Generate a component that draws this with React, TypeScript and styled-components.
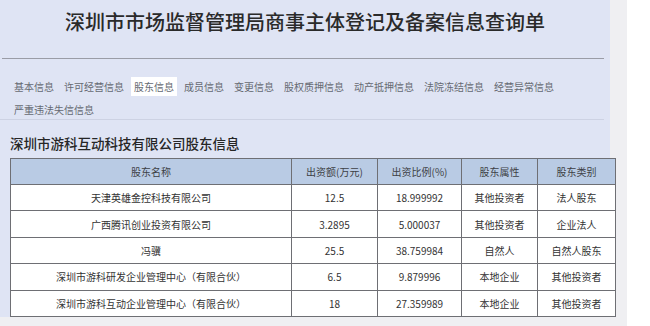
import React from "react";
import styled, { createGlobalStyle } from "styled-components";

const Global = createGlobalStyle`
  html, body { margin: 0; padding: 0; background: #ffffff; }
  body { font-family: "Noto Sans CJK SC", "Noto Sans", sans-serif; }
`;

const Outer = styled.div`
  width: 627px;
  height: 326px;
  background: #efeff2;
`;

const Panel = styled.div`
  width: 610px;
  height: 317px;
  background: #dfe4f4;
  display: flex;
  flex-direction: column;
`;

const Title = styled.h1`
  margin: 0;
  padding-top: 7px;
  height: 59px;
  box-sizing: border-box;
  text-align: center;
  font-size: 20px;
  line-height: 30px;
  font-weight: 500;
  color: #2a2a2a;
`;

const Rule = styled.div`
  margin: 0 6px 0 2px;
  height: 1px;
  background: #9a9ca6;
`;

const Tabs = styled.div`
  display: flex;
  flex-wrap: wrap;
  column-gap: 4px;
  row-gap: 4px;
  padding: 18px 40px 0 11px;
  height: 62px;
  box-sizing: border-box;
  border-bottom: 1px solid #cdd2e3;
  margin-right: 6px;
`;

const Tab = styled.span<{ $active?: boolean }>`
  height: 19px;
  line-height: 19px;
  padding: 0 3px;
  font-size: 10px;
  color: #666a72;
  background: ${(p) => (p.$active ? "#ffffff" : "transparent")};
  white-space: nowrap;
`;

const Section = styled.h2`
  margin: 0;
  padding: 14px 0 0 10px;
  height: 39px;
  box-sizing: border-box;
  font-size: 13.5px;
  line-height: 18px;
  font-weight: 500;
  color: #262626;
`;

const Table = styled.table`
  margin-left: 10px;
  width: 600px;
  border-collapse: collapse;
  table-layout: fixed;
  font-size: 10px;
  color: #333;
  text-align: center;
`;

const Th = styled.th<{ $w: number }>`
  width: ${(p) => p.$w}px;
  height: 25px;
  padding: 0;
  background: #b9cbe4;
  border: 1px solid #6e6f74;
  font-weight: 400;
  color: #3d3f45;
`;

const Td = styled.td`
  height: 25.4px;
  padding: 0;
  background: #ffffff;
  border: 1px solid #6e6f74;
  white-space: nowrap;
`;

const cols: [string, number][] = [
  ["股东名称", 280],
  ["出资额(万元)", 85],
  ["出资比例(%)", 83],
  ["股东属性", 75],
  ["股东类别", 77],
];

const rows = [
  ["天津英雄金控科技有限公司", "12.5", "18.999992", "其他投资者", "法人股东"],
  ["广西腾讯创业投资有限公司", "3.2895", "5.000037", "其他投资者", "企业法人"],
  ["冯骥", "25.5", "38.759984", "自然人", "自然人股东"],
  ["深圳市游科研发企业管理中心（有限合伙）", "6.5", "9.879996", "本地企业", "其他投资者"],
  ["深圳市游科互动企业管理中心（有限合伙）", "18", "27.359989", "本地企业", "其他投资者"],
];

const tabs = [
  "基本信息",
  "许可经营信息",
  "股东信息",
  "成员信息",
  "变更信息",
  "股权质押信息",
  "动产抵押信息",
  "法院冻结信息",
  "经营异常信息",
  "严重违法失信信息",
];

export default function App() {
  return (
    <>
      <Global />
      <Outer>
        <Panel>
          <Title>深圳市市场监督管理局商事主体登记及备案信息查询单</Title>
          <Rule />
          <Tabs>
            {tabs.map((t) => (
              <Tab key={t} $active={t === "股东信息"}>
                {t}
              </Tab>
            ))}
          </Tabs>
          <Section>深圳市游科互动科技有限公司股东信息</Section>
          <Table>
            <thead>
              <tr>
                {cols.map(([c, w]) => (
                  <Th key={c} $w={w}>
                    {c}
                  </Th>
                ))}
              </tr>
            </thead>
            <tbody>
              {rows.map((r) => (
                <tr key={r[0]}>
                  {r.map((c, i) => (
                    <Td key={i}>{c}</Td>
                  ))}
                </tr>
              ))}
            </tbody>
          </Table>
        </Panel>
      </Outer>
    </>
  );
}
